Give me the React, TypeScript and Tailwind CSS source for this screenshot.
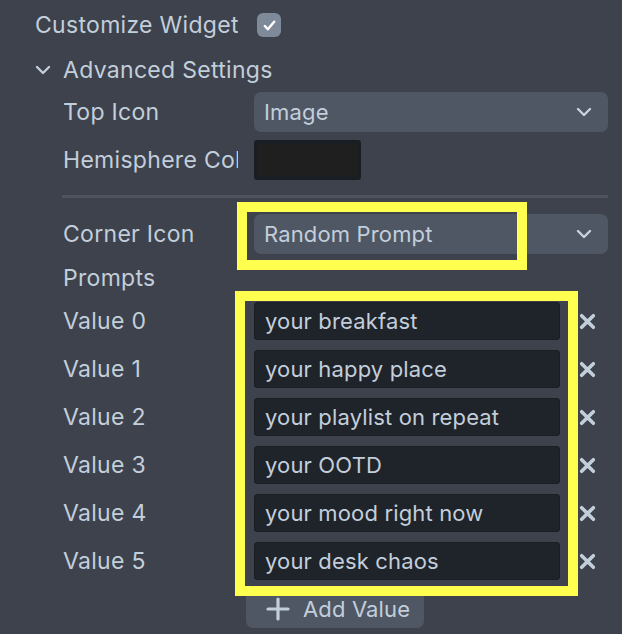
import { useState } from 'react';

const prompts = [
  'your breakfast',
  'your happy place',
  'your playlist on repeat',
  'your OOTD',
  'your mood right now',
  'your desk chaos',
];

const Chevron = ({ className = '' }: { className?: string }) => (
  <svg viewBox="0 0 16 10" className={className} fill="none" stroke="currentColor" strokeWidth="2.4" strokeLinecap="round" strokeLinejoin="round">
    <path d="M2 2l6 6 6-6" />
  </svg>
);

const Select = ({ value }: { value: string }) => (
  <div className="flex h-[40px] w-[354px] items-center justify-between rounded-[7px] bg-[#4e5763] pl-[10px] pr-[16px] text-[22px] tracking-[0.15px]">
    <span>{value}</span>
    <Chevron className="h-[10px] w-[16px] text-[#c9d3de]" />
  </div>
);

const Label = ({ children }: { children: string }) => (
  <div className="w-[175px] shrink-0 overflow-hidden whitespace-nowrap leading-[30px]">{children}</div>
);

export default function App() {
  const [checked] = useState(true);

  return (
    <div
      className="relative h-[634px] w-[622px] overflow-hidden bg-[#3d424c] text-[23px] leading-none tracking-[0.3px] text-[#c3cedb]"
      style={{ fontFamily: 'Inter, "Noto Sans", sans-serif' }}
    >
      <div className="flex flex-col">
        <div className="flex h-[50px] items-center pl-[35px]">
          <div className="w-[203px] shrink-0 overflow-hidden whitespace-nowrap leading-[30px]">Customize Widget</div>
          <div className="ml-[19px] flex h-[24px] w-[24px] items-center justify-center rounded-[6px] bg-[#7e8999]">
            {checked && (
              <svg viewBox="0 0 16 16" className="h-[15px] w-[15px]" fill="none" stroke="white" strokeWidth="2.6" strokeLinecap="round" strokeLinejoin="round">
                <path d="M3 8.5l3.2 3.5L13 4" />
              </svg>
            )}
          </div>
        </div>

        <div className="flex h-[40px] items-center pl-[35px]">
          <Chevron className="h-[10px] w-[16px] text-[#c3cedb]" />
          <span className="ml-[12px]">Advanced Settings</span>
        </div>

        <div className="mt-[2px] flex h-[40px] items-center gap-[16px] pl-[63px]">
          <Label>Top Icon</Label>
          <Select value="Image" />
        </div>

        <div className="mt-[8px] flex h-[40px] items-center gap-[16px] pl-[63px]">
          <Label>Hemisphere Color</Label>
          <div className="h-[40px] w-[107px] rounded-[3px] border-[4px] border-[#1a1e23] bg-[#1f1f1f]" />
        </div>

        <div className="ml-[62px] mr-[14px] mt-[15px] h-[3px] bg-[#4f535d]" />

        <div className="mt-[16px] flex h-[40px] items-center gap-[16px] pl-[63px]">
          <Label>Corner Icon</Label>
          <Select value="Random Prompt" />
        </div>

        <div className="flex h-[48px] items-center pl-[63px]">Prompts</div>

        <div className="flex flex-col gap-[10px]">
          {prompts.map((p, i) => (
            <div key={i} className="flex h-[38px] items-center pl-[63px]">
              <Label>{`Value ${i}`}</Label>
              <div className="ml-[16px] flex h-[38px] w-[306px] items-center rounded-[3px] border border-[#1a1d22] bg-[#1f232a] pl-[10px] text-[22px] tracking-[0.15px]">
                {p}
              </div>
              <svg viewBox="0 0 16 16" className="ml-[19px] h-[17px] w-[17px]" fill="none" stroke="#c3cedb" strokeWidth="3.4" strokeLinecap="round">
                <path d="M2.5 2.5l11 11M13.5 2.5l-11 11" />
              </svg>
            </div>
          ))}
        </div>

        <div className="ml-[246px] mt-[10px] flex h-[38px] w-[178px] items-center rounded-[7px] bg-[#4e5763] pl-[20px] text-[22px] tracking-[0.15px]">
          <svg viewBox="0 0 24 24" className="h-[24px] w-[24px]" fill="none" stroke="#c3cedb" strokeWidth="3.2" strokeLinecap="round">
            <path d="M12 2v20M2 12h20" />
          </svg>
          <span className="ml-[13px]">Add Value</span>
        </div>
      </div>

      {/* annotation highlights */}
      <div className="pointer-events-none absolute left-[237px] top-[202px] h-[68px] w-[290px] border-[10px] border-[#ffff4f]" />
      <div className="pointer-events-none absolute left-[235px] top-[291px] h-[305px] w-[343px] border-[10px] border-[#ffff4f]" />
    </div>
  );
}
